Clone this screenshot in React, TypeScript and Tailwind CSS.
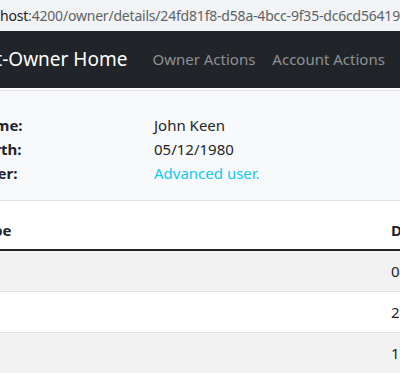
import React from "react";

export default function App() {
  const font = { fontFamily: '"Noto Sans", "Open Sans", sans-serif' };
  return (
    <div className="w-[400px] h-[373px] overflow-hidden bg-white relative" style={font}>
      <div className="h-[31px] bg-[#f1f3f4] flex items-center whitespace-nowrap text-[14px] tracking-[-0.2px] overflow-hidden">
        <span className="text-[#202124]">host</span>
        <span className="text-[#5f6368]">:4200/owner/details/24fd81f8-d58a-4bcc-9f35-dc6cd564190</span>
      </div>
      <div className="h-[57px] bg-[#212529] flex items-center whitespace-nowrap overflow-hidden">
        <span className="text-white text-[19px] -ml-[70px] shrink-0">Account-Owner Home</span>
        <span className="text-[#8e9194] text-[15px] ml-[25px] shrink-0">Owner Actions</span>
        <span className="text-[#8e9194] text-[15px] ml-[17px] shrink-0">Account Actions</span>
      </div>
      <div className="h-[2px] bg-white" />
      <div className="h-[111px] bg-[#f8f9fa] border-t border-b border-[#dee2e6] pt-[22px] text-[15px] text-[#212529] leading-[24px] whitespace-nowrap">
        <div className="flex -ml-[78px]">
          <div className="w-[232px] shrink-0 font-bold">Owner name:</div>
          <div>John Keen</div>
        </div>
        <div className="flex -ml-[78px]">
          <div className="w-[232px] shrink-0 font-bold">Date of birth:</div>
          <div>05/12/1980</div>
        </div>
        <div className="flex -ml-[78px]">
          <div className="w-[232px] shrink-0 font-bold">Type of user:</div>
          <div className="text-[#0dcaf0]">Advanced user.</div>
        </div>
      </div>
      <div className="text-[15px] text-[#212529] whitespace-nowrap">
        <div className="h-[50px] flex items-end pb-[8px] border-b-2 border-[#212529]">
          <span className="font-bold -ml-[24px] w-[415px] shrink-0">Type</span>
          <span className="font-bold shrink-0">Date</span>
        </div>
        <div className="h-[41px] bg-[#f2f2f2] border-b border-[#dee2e6] flex items-center">
          <span className="ml-[391px] shrink-0">04/05/2019</span>
        </div>
        <div className="h-[41px] bg-white border-b border-[#dee2e6] flex items-center">
          <span className="ml-[391px] shrink-0">21/02/2020</span>
        </div>
        <div className="h-[41px] bg-[#f2f2f2] flex items-center">
          <span className="ml-[391px] shrink-0">12/03/2020</span>
        </div>
      </div>
    </div>
  );
}
